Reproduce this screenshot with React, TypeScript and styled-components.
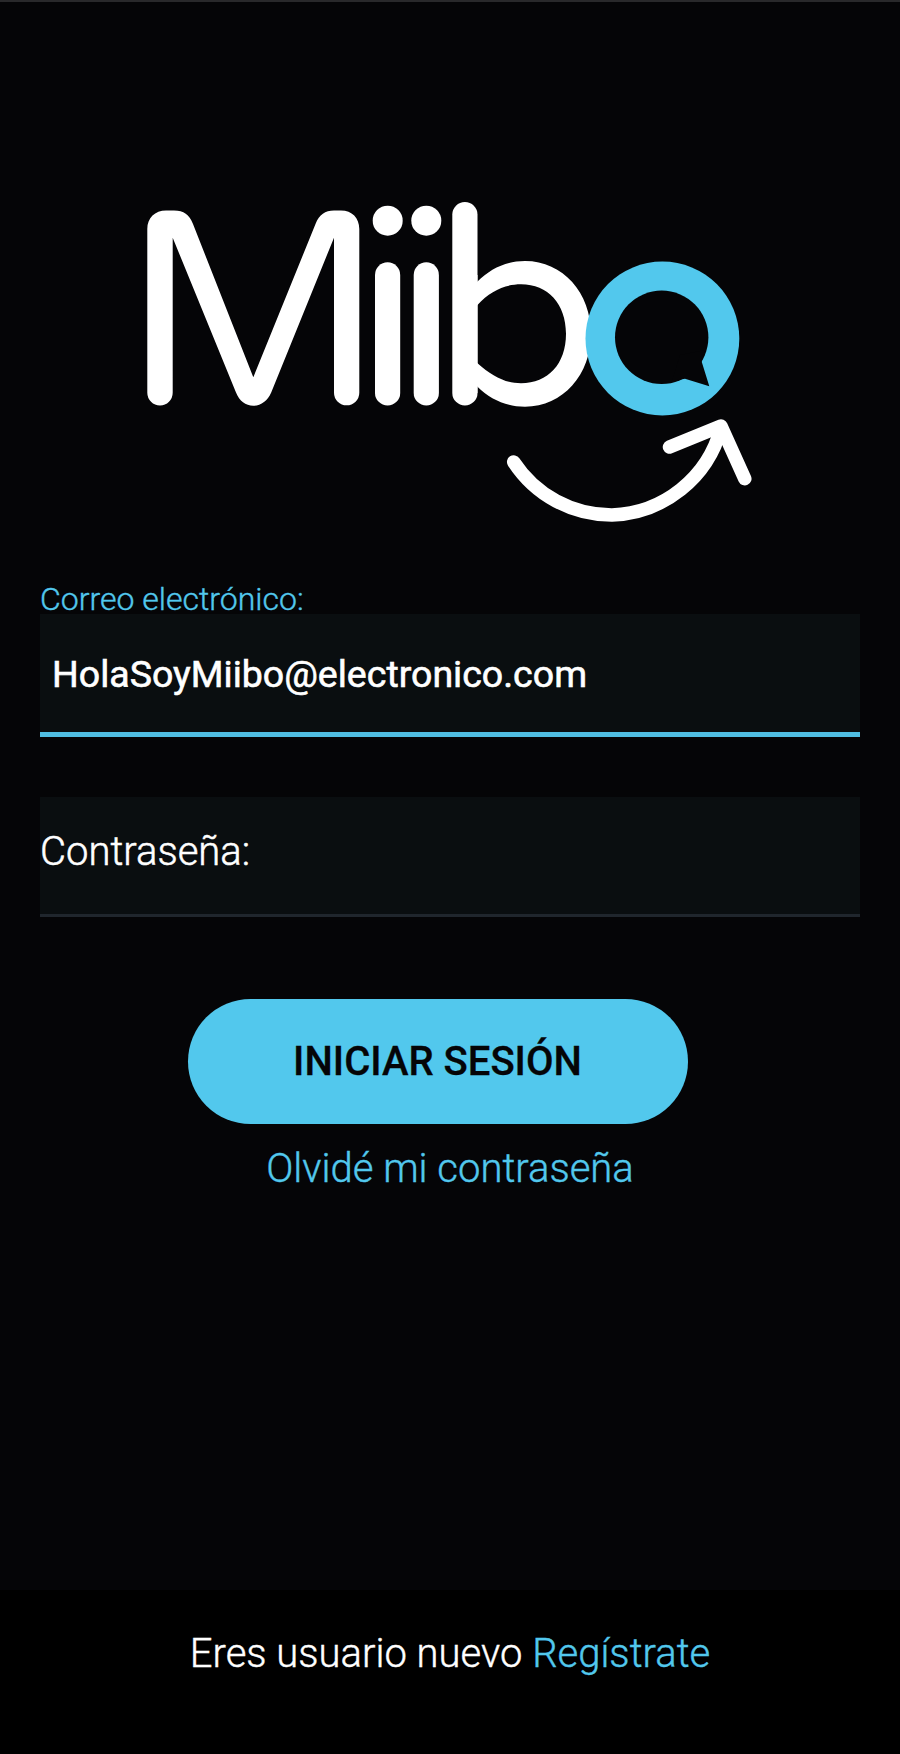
import React from "react";
import styled, { createGlobalStyle } from "styled-components";

const accent = "#52c8ed";

const GlobalStyle = createGlobalStyle`
  *, *::before, *::after { box-sizing: border-box; }
  body {
    margin: 0;
    background: #050507;
    font-family: Roboto, "Liberation Sans", sans-serif;
    font-weight: 300;
    -webkit-text-stroke: 0.4px currentColor;
  }
`;

const Screen = styled.div`
  display: flex;
  flex-direction: column;
  width: 900px;
  height: 1754px;
  border-top: 2px solid #29292b;
  background: #050507;
  overflow: hidden;
`;

const Main = styled.main`
  display: flex;
  flex-direction: column;
  flex: 1;
  padding: 198px 40px 0;
`;

const Logo = styled.svg`
  display: block;
  width: 610px;
  height: 324px;
  margin-left: 103px;
`;

const Form = styled.form`
  display: flex;
  flex-direction: column;
  margin-top: 56px;
`;

const Label = styled.label`
  height: 34px;
  line-height: 38px;
  font-size: 32px;
  color: ${accent};
`;

const Input = styled.input<{ $active?: boolean }>`
  width: 820px;
  height: ${(p) => (p.$active ? 123 : 120)}px;
  margin: 0;
  padding: ${(p) => (p.$active ? "1px 12px 0" : "0 0 8px")};
  border: 0;
  border-bottom: ${(p) => (p.$active ? `5px solid #50bee2` : "3px solid #20262d")};
  border-radius: 0;
  outline: 0;
  background: #0a0e10;
  color: #fff;
  font-family: inherit;
  font-size: ${(p) => (p.$active ? 37.5 : 40)}px;
  font-weight: ${(p) => (p.$active ? 400 : 300)};
  -webkit-text-stroke: ${(p) => (p.$active ? 0.6 : 0.5)}px currentColor;
  & + & { margin-top: 60px; }
  &::placeholder { color: #fff; opacity: 1; }
`;

const SubmitButton = styled.button`
  width: 500px;
  height: 125px;
  margin: 82px 0 0 147.5px;
  padding: 0;
  border: 0;
  border-radius: 63px;
  background: ${accent};
  color: #050507;
  font-family: inherit;
  font-size: 40px;
  font-weight: 500;
  -webkit-text-stroke: 0.3px currentColor;
`;

const Link = styled.a`
  color: ${accent};
  text-decoration: none;
`;

const ForgotLink = styled(Link)`
  align-self: center;
  margin-top: 21px;
  line-height: 48px;
  font-size: 40px;
`;

const Footer = styled.footer`
  display: flex;
  justify-content: center;
  height: 164px;
  padding-top: 40px;
  background: #000;
  color: #fff;
  font-size: 40px;
  line-height: 48px;
  white-space: pre;
`;

function MiiboLogo() {
  return (
    <Logo viewBox="143 200 610 324" role="img" aria-label="Miibo">
      <g fill="#fff">
        <path d="M147.3 392.7V229C147.3 218 155 210.6 166 210.6H174C184 210.6 189 214.5 193 224L253.3 377.3L315.5 224C319.5 214.5 325 210.6 334 210.6H341C352 210.6 359.3 218 359.3 229V392.7A12.65 12.65 0 0 1 334 392.7V237.7L271.2 392.5C267.5 401 261 405.7 253.3 405.7C245.5 405.7 239.5 401 236 392.5L172.7 237.7V392.7A12.7 12.7 0 0 1 147.3 392.7Z" />
        <circle cx="387.7" cy="220.7" r="15" />
        <circle cx="426.3" cy="220.7" r="15" />
        <rect x="375" y="262.3" width="25.2" height="143.2" rx="12.6" />
        <rect x="413.7" y="262.3" width="25.2" height="143.2" rx="12.6" />
        <rect x="452.3" y="202" width="25.2" height="203.5" rx="12.6" />
        <path
          fillRule="evenodd"
          d="M476 283L477.5 281.5C490 269 506 261 525 261C563 261 591 293 591 333.8C591 374.5 563 406.7 525 406.7C506 406.7 490 399 477.5 386.7L476 385ZM476 306.3V362.1L477.5 363.3C492 376 505 383.3 521 383.3C548 383.3 566 364 566 333.8C566 304 548 284.3 521 284.3C505 284.3 490 291 477.5 305Z"
        />
        <rect x="470" y="275" width="7.5" height="118" />
      </g>
      <circle cx="662.4" cy="338.5" r="76.9" fill={accent} />
      <circle cx="661.7" cy="337.3" r="46.7" fill="#050507" />
      <path d="M705 350L701.7 361.7L709.3 386.3L685 378.7L672 381L680 355Z" fill="#050507" />
      <g fill="none" stroke="#fff" strokeWidth="13.5" strokeLinecap="round" strokeLinejoin="round">
        <path d="M513.7 462A117 117 0 0 0 612 515A117 117 0 0 0 721 428" />
        <path d="M669.5 447L721 426L744.8 478.7" />
      </g>
    </Logo>
  );
}

export default function App() {
  return (
    <>
      <GlobalStyle />
      <Screen>
        <Main>
          <MiiboLogo />
          <Form>
            <Label htmlFor="email">Correo electrónico:</Label>
            <Input $active id="email" defaultValue="HolaSoyMiibo@electronico.com" spellCheck={false} />
            <Input type="password" placeholder="Contraseña:" aria-label="Contraseña" />
            <SubmitButton type="button">INICIAR SESIÓN</SubmitButton>
            <ForgotLink href="#">Olvidé mi contraseña</ForgotLink>
          </Form>
        </Main>
        <Footer>
          <span>Eres usuario nuevo </span>
          <Link href="#">Regístrate</Link>
        </Footer>
      </Screen>
    </>
  );
}
